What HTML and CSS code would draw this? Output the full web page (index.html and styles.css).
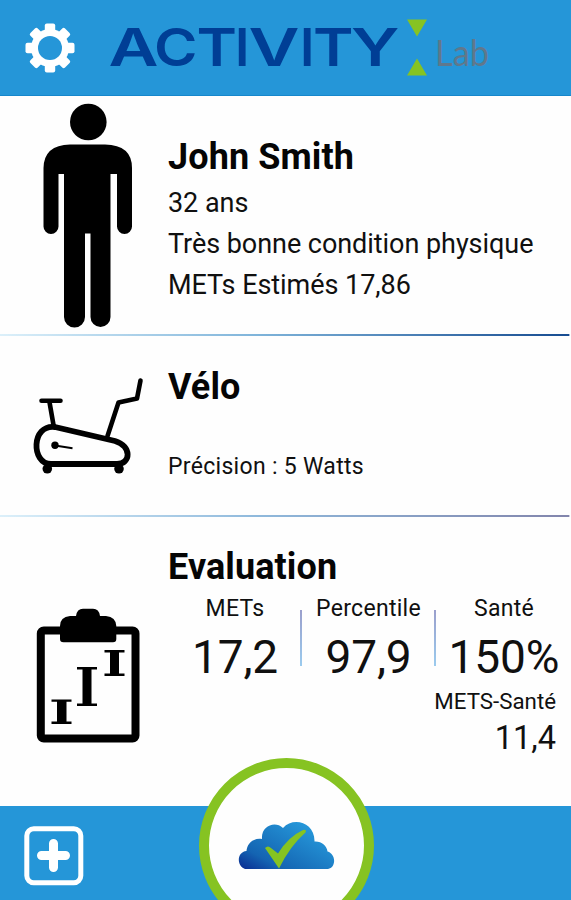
FILE: index.html
```html
<!DOCTYPE html>
<html lang="fr">
<head>
<meta charset="utf-8">
<meta name="viewport" content="width=device-width, initial-scale=1">
<title>Activity Lab</title>
<link rel="stylesheet" href="styles.css">
</head>
<body>
<div class="app">
  <header class="topbar">
    <svg class="gear" viewBox="-25 -25 50 50" aria-hidden="true">
      <g fill="#fff">
        <g>
          <rect x="-5.2" y="-24.5" width="10.4" height="49" rx="2"/>
          <rect x="-24.5" y="-5.2" width="49" height="10.4" rx="2"/>
        </g>
        <g transform="rotate(45)">
          <rect x="-5.2" y="-24.5" width="10.4" height="49" rx="2"/>
          <rect x="-24.5" y="-5.2" width="49" height="10.4" rx="2"/>
        </g>
        <circle r="19"/>
      </g>
      <circle r="12" fill="#2596d8"/>
    </svg>
    <svg class="logo" viewBox="100 10 400 76" role="img" aria-label="Activity Lab">
      <text class="logo-main" y="66"><tspan x="108.500" textLength="50" lengthAdjust="spacingAndGlyphs">A</tspan><tspan x="154" textLength="43.500" lengthAdjust="spacingAndGlyphs">C</tspan><tspan x="196.500" textLength="40.500" lengthAdjust="spacingAndGlyphs">T</tspan><tspan x="235">I</tspan><tspan x="248.500" textLength="51" lengthAdjust="spacingAndGlyphs">V</tspan><tspan x="300">I</tspan><tspan x="313" textLength="40.500" lengthAdjust="spacingAndGlyphs">T</tspan><tspan x="351" textLength="48.500" lengthAdjust="spacingAndGlyphs">Y</tspan></text>
      <path d="M407 19.5h20l-10 17zM407 75.5h20l-10 -17z" fill="#86c322"/>
      <text class="logo-sub" x="435" y="66" textLength="54" lengthAdjust="spacingAndGlyphs">Lab</text>
    </svg>
  </header>

  <main>
    <section class="row profile">
      <svg class="art man" viewBox="0 0 120 240" aria-hidden="true">
        <circle cx="58.3" cy="26" r="18.3"/>
        <path d="M40 48.500H75Q102 49 102 72V130.500A7.500 7.500 0 0 1 87 130.500V78H80.500V221A10 10 0 0 1 60.500 221V137.500H55V221A10 10 0 0 1 34 221V78H28.500V130.500A7.500 7.500 0 0 1 13.500 130.500V72Q14 49 40 48.500Z"/>
      </svg>
      <div class="info">
        <h2 class="t-name">John Smith</h2>
        <p class="t-age">32 ans</p>
        <p class="t-cond">Très bonne condition physique</p>
        <p class="t-est">METs Estimés 17,86</p>
      </div>
    </section>

    <section class="row device">
      <svg class="art bike" viewBox="20 365 130 120" aria-hidden="true">
        <g fill="none" stroke="#000" stroke-linecap="round" stroke-linejoin="round">
          <path stroke-width="5.800" d="M55 427L115 441C132 446 131 464 117 464H51C31 464 31 424 55 427Z"/>
          <path stroke-width="4.600" d="M41.500 400.800H60.500M49.300 401L53.500 425M107.500 436L118.500 402.500L137 398.500L140.500 380.500"/>
          <path stroke-width="2" stroke-linecap="butt" d="M55 445.500L72.500 448.200"/>
        </g>
        <circle cx="55" cy="445.300" r="3.700"/>
        <circle cx="47.300" cy="468.800" r="4.800"/>
        <circle cx="119" cy="468.800" r="4.800"/>
      </svg>
      <div class="info">
        <h2 class="t-bike">Vélo</h2>
        <p class="t-prec">Précision : 5 Watts</p>
      </div>
    </section>

    <section class="row evaluation">
      <svg class="art board" viewBox="30 600 120 150" aria-hidden="true">
        <rect x="40.800" y="630.500" width="94.700" height="108" rx="3" fill="none" stroke="#000" stroke-width="8"/>
        <path d="M60 639V626Q60 617 70 616H76Q77 608.800 83 608.800H93Q99 608.800 100 616H106Q116 617 116.300 626V639Q116.300 642.300 113 642.300H63.500Q60 642.300 60 639Z"/>
        <path d="M51.500 699.500H71.500V701.800H66.500V721.500H71.500V724H51.500V721.500H57V701.800H51.500ZM77 667H97V669.500H91.500V703.500H97V706H77V703.500H82.500V669.500H77ZM104.500 650H124.500V652.500H119V673.500H124.500V676H104.500V673.500H110V652.500H104.500Z"/>
      </svg>
      <div class="info">
        <h2 class="t-eval">Evaluation</h2>
        <div class="metrics">
          <div class="metric m1"><span class="label">METs</span><span class="value">17,2</span></div>
          <i class="sep"></i>
          <div class="metric m2"><span class="label">Percentile</span><span class="value">97,9</span></div>
          <i class="sep"></i>
          <div class="metric m3"><span class="label">Santé</span><span class="value">150%</span></div>
        </div>
        <div class="health"><span class="health-label">METS-Santé</span><span class="health-value">11,4</span></div>
      </div>
    </section>
  </main>

  <footer class="bottombar">
    <svg class="add" viewBox="0 0 60 60" aria-hidden="true">
      <rect x="2.800" y="2.800" width="54" height="54" rx="7" fill="none" stroke="#fff" stroke-width="5"/>
      <path d="M29.500 17.500V41.500M17.500 29.500H41.500" stroke="#fff" stroke-width="9" stroke-linecap="round"/>
    </svg>
    <div class="sync">
      <svg class="cloud" viewBox="238 820 97 50" aria-hidden="true">
        <defs><linearGradient id="sky" x1="0" y1="1" x2="0.850" y2="0.250">
          <stop offset="0" stop-color="#0a2a90"/><stop offset=".3" stop-color="#1464b2"/><stop offset="1" stop-color="#2596d8"/>
        </linearGradient></defs>
        <path fill="url(#sky)" d="M245 869C236.500 866 236.500 852 246.500 851C247 843 254 837.500 262 839C261 826 275 820.500 283 828C293 816.500 315 822 314.500 841.500C321.500 841 327 846 327.500 851.500C336.500 854 336 868 328 869Z"/>
        <path fill="#86c322" d="M265 848Q268 845 271 848L278 853.500Q288 837 303 830Q307 829 305.500 832.500Q290 846 279 868.500Z"/>
      </svg>
    </div>
  </footer>
</div>
</body>
</html>
```

FILE: styles.css
```css
* { box-sizing: border-box; margin: 0; padding: 0; }
body { background: #fefefe; color: #101010; font-family: Roboto, "Liberation Sans", sans-serif; }
svg { display: block; flex: none; }
.app { width: 571px; height: 900px; display: flex; flex-direction: column; overflow: hidden; }

.topbar { height: 96px; flex: none; display: flex; background: #2596d8; border-bottom: 1px solid #1687cc; }
.gear { width: 50px; height: 50px; margin: 23px 0 0 25px; }
.logo { width: 400px; height: 76px; margin: 10px 0 0 25px; }
.logo-main { font: 600 52px Inter, sans-serif; fill: #003e95; }
.logo-sub { font: 400 36px Lato, sans-serif; fill: #60788c; }

main { flex: 1; display: flex; flex-direction: column; }
.row { display: flex; position: relative; }
.row + .row { border-top: 2px solid; }
.row.device { border-image: linear-gradient(90deg, #dcf0fa, #7fb4da 45%, #174c91 99.5%, #fefefe 99.6%) 1; }
.row.evaluation { border-image: linear-gradient(90deg, #dcf0fa, #8fb9dc 45%, #8285ac 99.5%, #fefefe 99.6%) 1; }
.info { flex: 1; display: flex; flex-direction: column; align-items: flex-start; white-space: nowrap; }
.profile { height: 238px; }
.device { height: 181px; }
.evaluation { flex: 1; }

.man { width: 120px; height: 240px; margin-left: 30px; }
.profile .info { padding: 39px 0 0 18px; }
.bike { width: 130px; height: 120px; margin: 29px 0 0 20px; }
.device .info { padding: 29px 0 0 18px; }
.board { width: 120px; height: 150px; margin: 83px 0 0 30px; }
.evaluation .info { padding: 28px 0 0 18px; }

h2 { font-size: 36px; line-height: 44px; font-weight: 700; color: #050505; letter-spacing: 0.1px; }
.profile p { font-size: 27px; line-height: 41px; font-weight: 400; letter-spacing: -0.05px; }
.profile .t-age { margin-top: 4px; }
.t-prec { font-size: 23px; line-height: 28px; margin-top: 44px; letter-spacing: 0.3px; }

.metrics { display: flex; width: 403px; height: 97px; padding-top: 2px; }
.metric { display: flex; flex-direction: column; align-items: center; }
.m1 { width: 132px; padding-left: 2px; }
.m2 { width: 132px; padding-left: 1px; }
.m3 { width: 134px; padding-left: 2px; }
.label { font-size: 23px; line-height: 36px; letter-spacing: 0.3px; }
.value { font-size: 46px; line-height: 60px; letter-spacing: -0.1px; }
.sep { width: 2px; height: 56px; margin-top: 19px; background: linear-gradient(#9a9fcc, #9bcbee); }
.health { align-self: flex-end; display: flex; flex-direction: column; align-items: flex-end; margin-right: 15px; }
.health-label { font-size: 22.3px; line-height: 31px; }
.health-value { font-size: 32.5px; line-height: 43px; }

.bottombar { height: 94px; flex: none; background: #2596d8; display: flex; position: relative; }
.add { width: 60px; height: 60px; margin: 20px 0 0 24px; }
.sync { position: absolute; left: 199px; top: -48px; width: 175px; height: 175px; border: 10px solid #86c322; border-radius: 50%; background: #fefefe; }
.cloud { width: 97px; height: 50px; margin: 52px 0 0 29px; }
```
